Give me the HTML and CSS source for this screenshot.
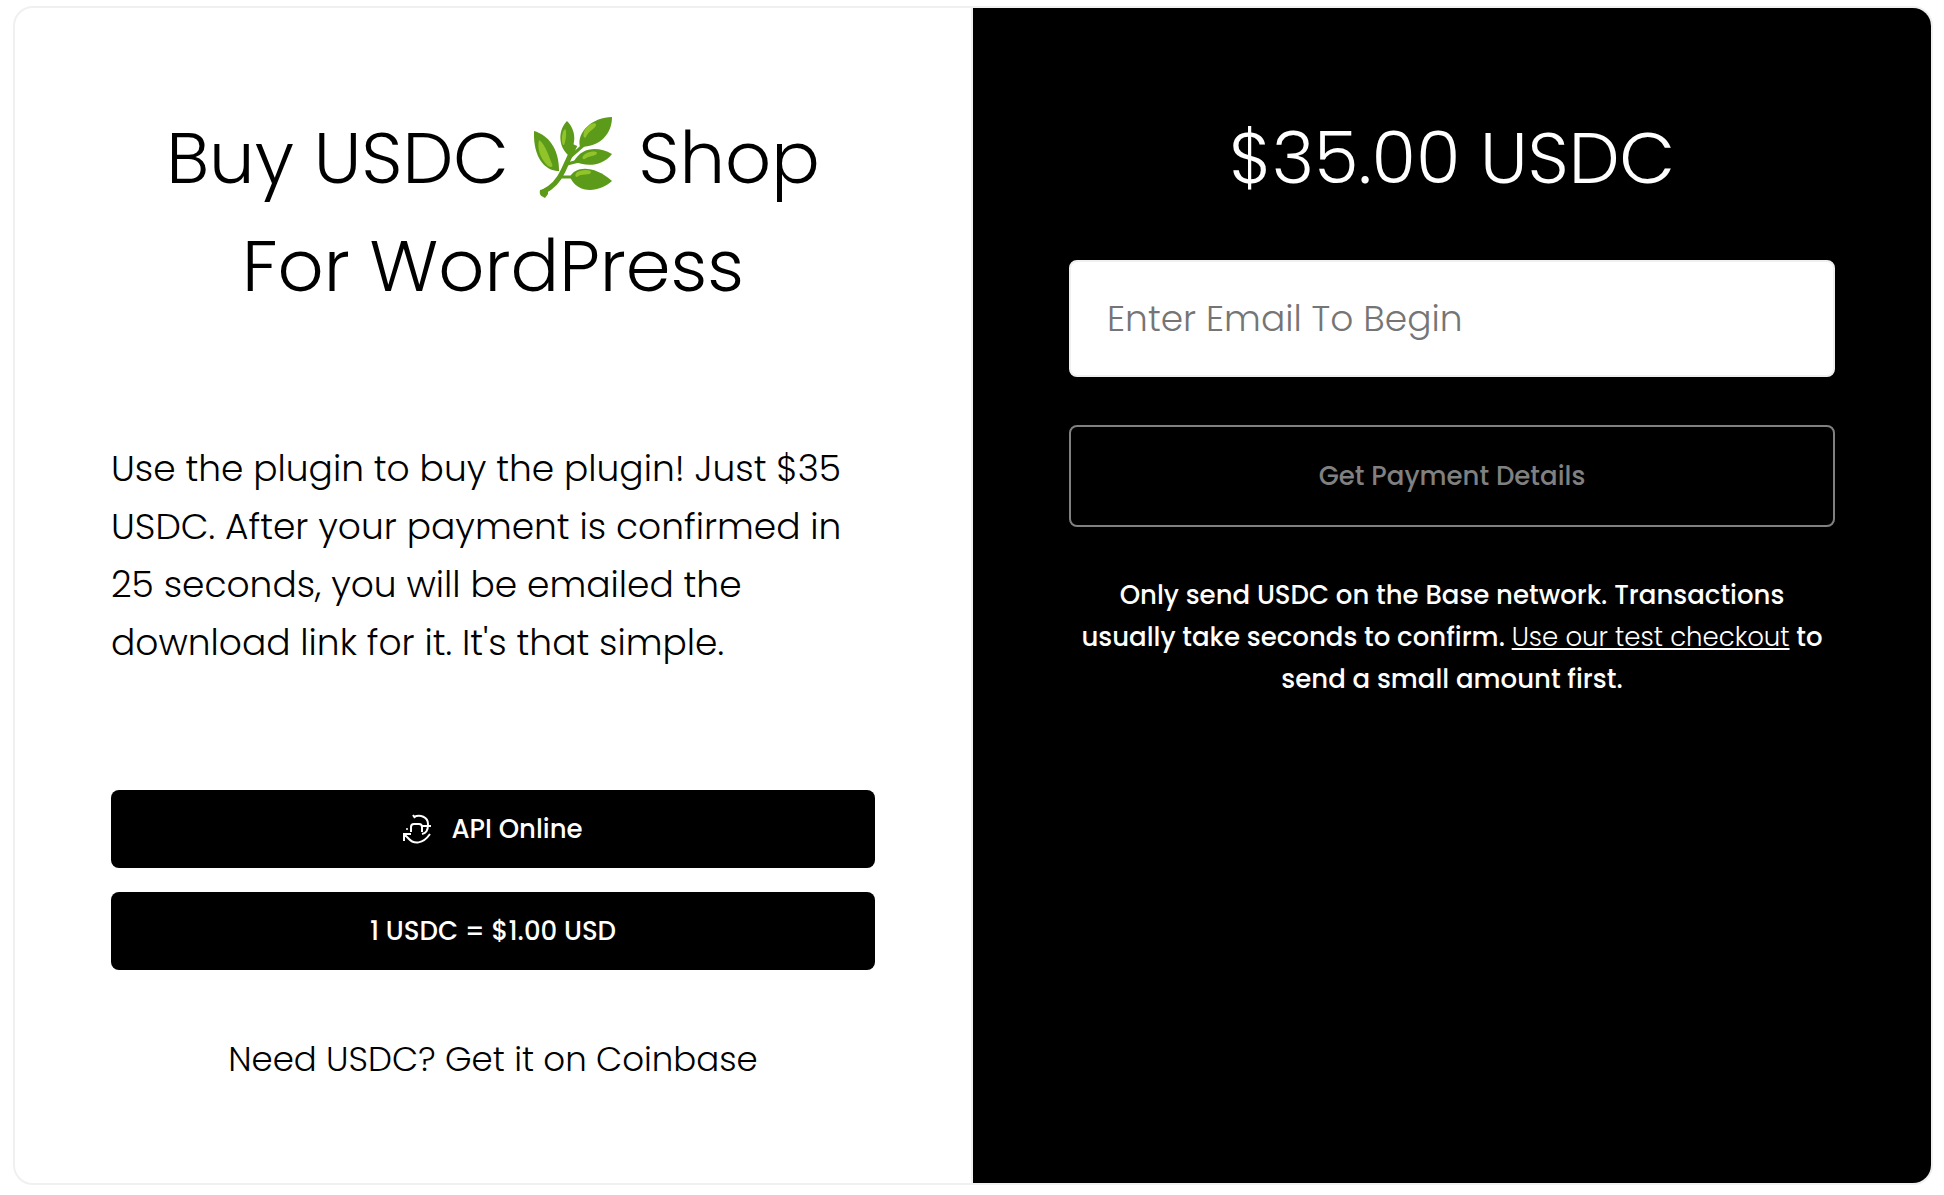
FILE: index.html
```html
<!DOCTYPE html>
<html lang="en">
	<head>
		<meta charset="utf-8">
		<meta name="viewport" content="width=device-width, initial-scale=1">
		<title>Buy USDC Shop For WordPress</title>
		<link rel="stylesheet" href="styles.css">
	</head>
	<body>
		<main class="checkout">
			<section class="product">
				<h1 class="title">
					Buy USDC
					<svg class="leaf" viewBox="0 0 80 82" role="img" aria-label="Herb">
						<path d="M9 75C19 70 25 63 29 54L41 28" fill="none" stroke="#5c9a1a" stroke-width="5"/>
						<path d="M28 60L42 60M33 47L45 44M36 40L52 26" fill="none" stroke="#5c9a1a" stroke-width="3"/>
						<path d="M6 73L14 71L14 77L11 81C7 79 5 78 6 73Z" fill="#5c9a1a"/>
						<path d="M0 14C14 18 25 31 25 54C12 54 -1 42 0 14Z" fill="#5c9a1a"/>
						<path d="M33 4C42 13 43 27 34 38C24 29 24 13 33 4Z" fill="#5c9a1a"/>
						<path d="M78 0C78 16 67 30 46 30C42 15 59 0 78 0Z" fill="#5c9a1a"/>
						<path d="M40 44C48 30 64 29 78 37C68 50 51 50 40 44Z" fill="#5c9a1a"/>
						<path d="M36 60C41 49 60 48 78 64C65 76 43 77 36 60Z" fill="#5c9a1a"/>
						<path d="M5 23C11 27 14 37 18 47C20 51 15 51 12 47C6 40 3 31 5 23Z" fill="#91c42a"/>
						<path d="M31 12C33 13 32 24 30 28C27 29 27 15 31 12Z" fill="#91c42a"/>
						<path d="M62 7C63 11 54 14 52 20C49 23 48 15 53 10C56 7 61 5 62 7Z" fill="#91c42a"/>
						<path d="M63 36C62 40 55 38 51 42C47 43 48 38 53 36C57 34 63 34 63 36Z" fill="#91c42a"/>
						<path d="M57 55C57 59 47 56 43 60C40 60 41 55 46 54C51 52 57 53 57 55Z" fill="#91c42a"/>
					</svg>
					Shop For WordPress
				</h1>
				<p class="description">Use the plugin to buy the plugin! Just $35 USDC. After your payment is confirmed in 25 seconds, you will be emailed the download link for it. It's that simple.</p>
				<div class="status_list">
					<div class="status">
						<svg class="sync" viewBox="0 0 28 30" aria-hidden="true">
							<path d="M11 3C17 0 25 3 25 10C25 17 23 19 19 20M10 1L12 4M19 12H28M8 18V13C8 11 9 10 11 10H16C18 10 19 11 19 13V18M1 27V20H8M1 20L5 24C11 31 20 30 27 20" fill="none" stroke="#fff" stroke-width="2"/>
							<circle cx="4" cy="15" r="1" fill="#fff"/>
						</svg>
						<span>API Online</span>
					</div>
					<div class="status">1 USDC = $1.00 USD</div>
				</div>
				<a class="coinbase" href="#">Need USDC? Get it on Coinbase</a>
			</section>
			<form class="payment">
				<h2 class="title">$35.00 USDC</h2>
				<input class="email" type="email" placeholder="Enter Email To Begin" aria-label="Email">
				<button class="details_btn" type="submit" disabled>Get Payment Details</button>
				<p class="note">Only send USDC on the Base network. Transactions usually take seconds to confirm. <a class="test_link" href="#">Use our test checkout</a> to send a small amount first.</p>
			</form>
		</main>
	</body>
</html>
```

FILE: styles.css
```css
* {
	box-sizing: border-box;
}

body {
	margin: 6px 11px 10px 13px;
	background: #fff;
	color: #000;
	font-family: Poppins, Inter, sans-serif;
	font-weight: 300;
}

.checkout {
	display: grid;
	grid-template-columns: 1fr 1fr;
	border: 2px solid #f0f0f0;
	border-radius: 20px;
	overflow: hidden;
}

.product, .payment {
	display: flex;
	flex-direction: column;
	padding: 96px;
}

.product {
	border-right: 2px solid #f0f0f0;
}

.payment {
	background: #000;
	color: #fff;
}

.title {
	margin: 0;
	font-size: 72px;
	font-weight: 300;
	line-height: 108px;
	text-align: center;
}

.leaf {
	width: 80px;
	height: 82px;
	margin: 0 5px;
	vertical-align: -16px;
}

.description {
	margin: 120px 0 118px;
	font-size: 36px;
	line-height: 58px;
}

.status_list {
	display: grid;
	gap: 24px;
}

.status {
	display: flex;
	align-items: center;
	justify-content: center;
	gap: 20px;
	height: 78px;
	border-radius: 8px;
	background: #000;
	color: #fff;
	font-size: 26px;
	font-weight: 500;
}

.sync {
	width: 28px;
	height: 30px;
}

.coinbase {
	margin-top: 61px;
	color: #000;
	font-size: 34px;
	line-height: 56px;
	text-align: center;
	text-decoration: none;
}

.email {
	width: 100%;
	height: 117px;
	margin-top: 48px;
	padding: 0 36px;
	border: 2px solid #f0f0f0;
	border-radius: 8px;
	background: #fff;
	color: #000;
	font: inherit;
	font-size: 36px;
}
.email::placeholder {
	color: #757575;
}

.details_btn {
	height: 102px;
	margin-top: 48px;
	border: 2px solid #808080;
	border-radius: 8px;
	background: #000;
	color: #808080;
	font: inherit;
	font-size: 26px;
	font-weight: 500;
}

.note {
	margin: 47px 0 0;
	padding: 0 6px;
	font-size: 26px;
	font-weight: 500;
	line-height: 42px;
	text-align: center;
}

.test_link {
	color: #fff;
	font-weight: 300;
}
```
